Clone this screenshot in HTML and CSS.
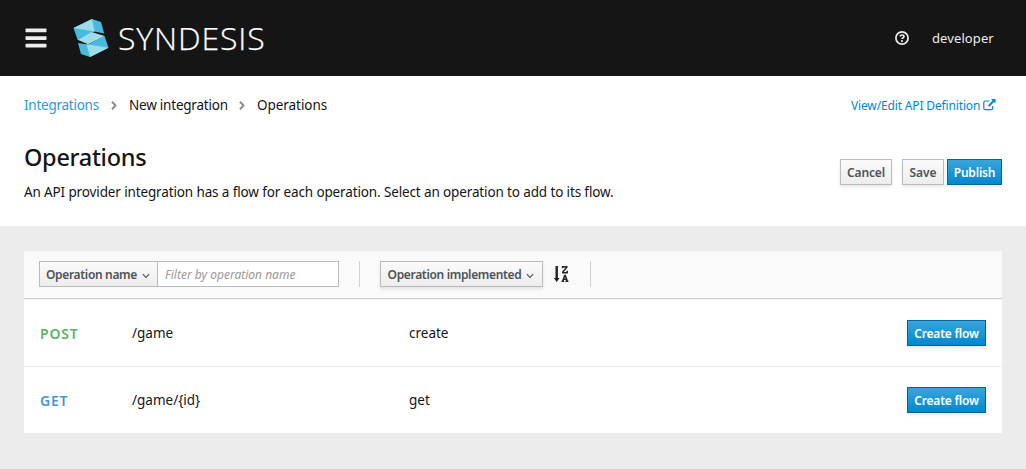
FILE: index.html
```html
<!DOCTYPE html>
<html lang="en">
<head>
<meta charset="utf-8">
<title>Syndesis</title>
<link rel="stylesheet" href="styles.css">
</head>
<body>
<header class="masthead">
  <svg class="menu" width="22" height="20" viewBox="0 0 22 20"><path d="M1 .5h20l.5.5v2.700l-.5.5H1l-.5-.5V1zM1 8.200h20l.5.5v2.700l-.5.5H1l-.5-.5V8.700zM1 15.800h20l.5.5v2.700l-.5.5H1l-.5-.5v-2.700z" fill="#ededed"/></svg>
  <svg class="logo" width="36" height="40" viewBox="73 18 36 40">
    <path fill="#4ab9de" d="M73.500 28L92 19l9 3 3.200 11.500-9.700-2L77.500 39.500zM104.500 36l4 11.700L90 57l-9-3-3-11 10 1.500z"/>
    <path fill="#9bdde9" d="M73.500 28L92 19l2.600 12.500zM77.500 39.700L91.500 32l13.300 4L88 44.300zM86.500 44.300l22 3.400L90 57z"/>
  </svg>
  <span class="brand">SYNDESIS</span>
  <svg class="help" width="14" height="14" viewBox="0 0 14 14"><circle cx="7" cy="7" r="6.100" fill="none" stroke="#ededed" stroke-width="1.700"/><path d="M4.900 5.200Q5.600 4 7 4q1.900 0 1.900 1.500Q8.900 6.500 7.800 7 7 7.400 7 8.100" fill="none" stroke="#ededed" stroke-width="1.700"/><circle cx="7" cy="10.100" r="1.050" fill="#ededed"/></svg>
  <span class="user">developer</span>
</header>
<section class="page-head">
  <div class="top-row">
    <nav class="crumbs">
      <a class="c1">Integrations</a>
      <svg width="6" height="9" viewBox="0 0 6 9"><path d="M1 .8l3.500 3.700L1 8.200" fill="none" stroke="#8b8d8f" stroke-width="2"/></svg>
      <span class="c2">New integration</span>
      <svg width="6" height="9" viewBox="0 0 6 9"><path d="M1 .8l3.500 3.700L1 8.200" fill="none" stroke="#8b8d8f" stroke-width="2"/></svg>
      <span class="c3">Operations</span>
    </nav>
    <a class="edit"><span>View/Edit API Definition</span><svg width="13" height="12" viewBox="0 0 13 12"><path d="M6.500 2H2.300Q.8 2 .8 3.500v5.700q0 1.500 1.500 1.500h5.900q1.500 0 1.500-1.500V7" fill="none" stroke="#0088ce" stroke-width="1.200"/><path d="M8 0h4.500v4.500L11 3 6.300 7.700 5 6.400l4.600-4.800z" fill="#0088ce"/></svg></a>
  </div>
  <div class="title-row">
    <div>
      <h1>Operations</h1>
      <p class="desc">An API provider integration has a flow for each operation. Select an operation to add to its flow.</p>
    </div>
    <div class="actions">
      <button class="btn cancel">Cancel</button>
      <button class="btn save">Save</button>
      <button class="btn primary publish">Publish</button>
    </div>
  </div>
</section>
<main class="card">
  <div class="toolbar">
    <button class="btn filter-by"><span>Operation name</span><svg width="8" height="6" viewBox="0 0 8 6"><path d="M.8 1.200L4 4.400l3.200-3.200" fill="none" stroke="#4d5258" stroke-width="1.100"/></svg></button>
    <input class="filter" placeholder="Filter by operation name">
    <i class="rule"></i>
    <button class="btn sort-by"><span>Operation implemented</span><svg width="8" height="6" viewBox="0 0 8 6"><path d="M.8 1.200L4 4.400l3.200-3.200" fill="none" stroke="#4d5258" stroke-width="1.100"/></svg></button>
    <svg class="sort" width="16" height="18" viewBox="0 0 16 18"><path d="M1.500 1h2.400v12H5.600L2.700 17-.2 13H1.500z" fill="#222"/><path d="M8.600 3.200V1.700h4.200v.5L8.800 7v.7h4.400V5.800M7.600 16.200h2.500m1.300 0h3M8.700 16l2-5.500h.6l2 5.500M9.300 14.200h3.500" fill="none" stroke="#222" stroke-width="1.500"/></svg>
    <i class="rule"></i>
  </div>
  <div class="row first">
    <strong class="method post">POST</strong><span class="path game">/game</span><span class="name create">create</span><button class="btn primary flow">Create flow</button>
  </div>
  <div class="row">
    <strong class="method get">GET</strong><span class="path game-id">/game/{id}</span><span class="name getter">get</span><button class="btn primary flow">Create flow</button>
  </div>
</main>
</body>
</html>
```
FILE: styles.css
```css
* { box-sizing: border-box; }
body { margin: 0; height: 469px; overflow: hidden; background: #ececec; color: #151515; font: 13.5px/21px "Noto Sans", sans-serif; white-space: nowrap; }
.masthead { display: flex; align-items: center; height: 76px; padding: 0 32px 0 25px; background: #151515; color: #ededed; }
.logo { margin-left: 26px; }
.brand { margin-left: 9px; font: 300 32px/40px "Open Sans", sans-serif; letter-spacing: .85px; color: #fff; -webkit-text-stroke: .25px #fff; }
.help { margin-left: auto; margin-right: 23px; }
.user { width: 62px; font-size: 13px; letter-spacing: .1px; }
.page-head { height: 150px; padding: 18px 24px 0; background: #fff; }
.top-row { display: flex; justify-content: space-between; height: 22px; align-items: center; }
.crumbs { display: flex; align-items: center; }
.crumbs svg { margin: 0 12px; }
.c1 { width: 75px; letter-spacing: -.25px; color: #2b9ad6; }
.c2 { width: 98px; letter-spacing: -.22px; }
.c3 { letter-spacing: -.05px; }
.edit { display: flex; align-items: center; color: #0088ce; font-size: 12px; letter-spacing: -.15px; margin-right: 6px; }
.edit span { width: 130px; margin-right: 2px; }
.title-row { display: flex; justify-content: space-between; }
h1 { margin: 23px 0 0; font: 500 23.5px/36px "Noto Sans", sans-serif; letter-spacing: -.3px; }
.desc { margin: 7px 0 0; line-height: 20px; letter-spacing: -.13px; }
.actions { display: flex; margin-top: 43px; }
.btn { display: flex; align-items: center; justify-content: center; height: 26px; padding: 1px 0 0; border: 1px solid #bbb; background: linear-gradient(#fafafa, #ededed); box-shadow: 0 2px 3px rgba(3,3,3,.1); color: #4d5258; font: 600 12px/20px "Noto Sans", sans-serif; letter-spacing: -.1px; }
.btn.primary { border-color: #00659c; background: linear-gradient(#39a5dc, #0088ce); color: #fff; letter-spacing: -.2px; }
.cancel { width: 52px; margin-right: 10px; }
.save { width: 42px; margin-right: 3px; }
.publish { width: 55px; }
.card { margin: 25px 24px 0; height: 182px; background: #fff; }
.toolbar { display: flex; align-items: center; height: 48px; padding: 0 15px 2px; background: #fafafa; border-bottom: 1px solid #d1d1d1; box-shadow: 0 1px 0 #efefef; }
.toolbar svg { margin: 2px 1px 0 5px; }
.filter-by { width: 119px; padding-top: 2px; box-shadow: none; letter-spacing: -.33px; }
.filter { width: 182px; height: 26px; margin-left: -1px; padding: 1px 7px 0; border: 1px solid #bbb; border-radius: 0; background: #fff; font: italic 12px/20px "Noto Sans", sans-serif; }
.filter::placeholder { color: #999; opacity: 1; }
.rule { width: 1px; height: 26px; margin-left: 20px; background: #d1d1d1; }
.sort-by { width: 163px; margin-left: 20px; padding-top: 2px; letter-spacing: -.33px; }
.toolbar .sort { margin: 0 0 0 11px; }
.row { display: flex; align-items: center; height: 66px; padding: 0 16px; }
.first { height: 68px; padding-top: 1px; border-bottom: 1px solid #ededed; }
.method { width: 92px; font-size: 14px; font-weight: 600; letter-spacing: .8px; }
.post { color: #5eb366; }
.get { color: #4598d5; }
.path { width: 277px; }
.flow { width: 79px; margin-left: auto; }
```
